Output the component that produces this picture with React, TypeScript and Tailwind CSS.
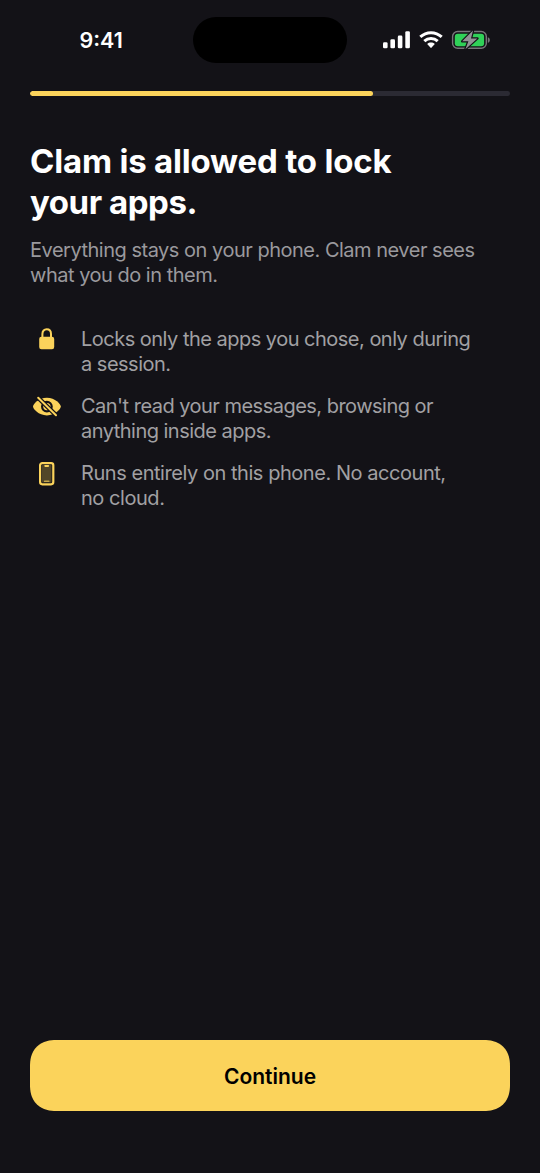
import React from "react";

const LockIcon = () => (
  <svg width="34" height="26" viewBox="0 0 34 26" fill="none">
    <path
      d="M12.4 12V6.9C12.4 4.1 14.2 2.3 16.7 2.3S21 4.1 21 6.9V12"
      stroke="#fbd35b"
      strokeWidth="2"
    />
    <rect x="9.2" y="9.8" width="15" height="12.5" rx="2.2" fill="#fbd35b" />
  </svg>
);

const EyeSlashIcon = () => (
  <svg width="34" height="26" viewBox="0 0 34 26" fill="none">
    <path
      d="M3 12.6C3 10.2 8.6 3.7 16.9 3.7S30.8 10.2 30.8 12.6 25.3 21.5 16.9 21.5 3 15 3 12.6Z"
      fill="#fbd35b"
    />
    <circle cx="16.9" cy="12.6" r="4.8" stroke="#131217" strokeWidth="2.2" />
    <circle cx="16.9" cy="12.6" r="1.7" fill="#131217" />
    <path d="M7 2.6L27 22.1" stroke="#131217" strokeWidth="4.4" />
    <path
      d="M8.2 3.7L26 21.3"
      stroke="#fbd35b"
      strokeWidth="2"
      strokeLinecap="round"
    />
  </svg>
);

const PhoneIcon = () => (
  <svg width="34" height="26" viewBox="0 0 34 26" fill="none">
    <rect
      x="10.1"
      y="2.1"
      width="13.2"
      height="21.2"
      rx="2.2"
      fill="#131217"
      stroke="#fbd35b"
      strokeWidth="2.2"
    />
    <rect x="11.9" y="4" width="9.6" height="17.4" rx="0.6" fill="#514628" />
    <rect x="14.3" y="4" width="4.8" height="1.9" rx="0.8" fill="#fbd35b" />
    <rect x="13.9" y="19.6" width="5.6" height="1.5" rx="0.6" fill="#c4a64b" />
  </svg>
);

const features = [
  {
    icon: <LockIcon />,
    lines: ["Locks only the apps you chose, only during", "a session."],
    className: "tracking-[-0.51px]",
  },
  {
    icon: <EyeSlashIcon />,
    lines: ["Can't read your messages, browsing or", "anything inside apps."],
    className: "tracking-[-0.52px]",
  },
  {
    icon: <PhoneIcon />,
    lines: ["Runs entirely on this phone. No account,", "no cloud."],
    className: "tracking-[-0.45px]",
  },
];

const StatusBar = () => (
  <header className="flex h-[91px] items-start px-[30px] pt-[17px] text-white">
    <div className="flex h-[47px] w-[163px] items-center pl-[49.5px] text-[21.5px] font-semibold">
      9:41
    </div>
    <div className="h-[45.5px] w-[154px] rounded-full bg-black" />
    <div className="flex h-[46px] flex-1 items-center pl-9">
      <svg width="108" height="20" viewBox="0 0 108 20" fill="none">
        <rect x="0" y="12.3" width="4.6" height="5.9" rx="1.3" fill="white" />
        <rect x="7.4" y="9.2" width="4.6" height="9" rx="1.3" fill="white" />
        <rect x="14.8" y="5.6" width="4.6" height="12.6" rx="1.3" fill="white" />
        <rect x="22.3" y="1.3" width="4.6" height="16.9" rx="1.3" fill="white" />
        <g stroke="white" strokeWidth="3">
          <path d="M37.3 6.9C43.4 1.2 52.6 1.2 58.7 6.9" />
          <path d="M41.3 11.2C45.1 7.6 50.9 7.6 54.7 11.2" />
        </g>
        <path
          d="M44.2 14C46.4 12.1 49.6 12.1 51.8 14L48.6 17.6Q48 18.2 47.4 17.6Z"
          fill="white"
        />
        <rect
          x="69.6"
          y="1.5"
          width="33.7"
          height="16.8"
          rx="5"
          stroke="#77767a"
          strokeWidth="1.4"
        />
        <rect x="71.8" y="3.8" width="29.3" height="12.4" rx="3" fill="#30d158" />
        <path d="M104.8 7.2C107.5 8 107.5 12 104.8 12.8Z" fill="#77767a" />
        <path
          d="M90 0.6L79.2 11.3H85.4L82.4 19.2L94.4 8.4H88Z"
          fill="#939296"
          stroke="#131217"
          strokeWidth="2.4"
          strokeLinejoin="round"
          paintOrder="stroke"
        />
      </svg>
    </div>
  </header>
);

const App = () => {
  return (
    <div className="flex h-[1173px] w-[540px] flex-col bg-[#131217] font-['Inter',sans-serif]">
      <StatusBar />
      <main className="flex flex-1 flex-col px-[30px] pb-[62px]">
        <div className="h-[5px] shrink-0 overflow-hidden rounded-full bg-[#2b2a33]">
          <div className="h-full w-[343px] rounded-full bg-[#fbd35b]" />
        </div>
        <h1 className="mt-[45px] text-[33px] leading-[41px] font-bold tracking-[-0.2px] whitespace-nowrap text-white">
          Clam is allowed to lock
          <br />
          <span className="tracking-[-0.45px]">your apps.</span>
        </h1>
        <p className="mt-[15px] text-[20px] leading-[25px] tracking-[-0.49px] whitespace-nowrap text-[#9a999d]">
          Everything stays on your phone. Clam never sees
          <br />
          what you do in them.
        </p>
        <ul className="mt-[39px] flex flex-col gap-[17px]">
          {features.map((feature) => (
            <li key={feature.lines[0]} className="flex gap-[17px]">
              <span className="h-[26px] w-[34px] shrink-0">{feature.icon}</span>
              <p
                className={`text-[20px] leading-[25px] whitespace-nowrap text-[#a1a0a3] ${feature.className}`}
              >
                {feature.lines[0]}
                <br />
                {feature.lines[1]}
              </p>
            </li>
          ))}
        </ul>
        <button className="mt-auto h-[71px] w-full rounded-[26px] bg-[#fbd35b] pt-[3px] text-[21px] font-semibold text-black [corner-shape:superellipse(1.2)]">
          Continue
        </button>
      </main>
    </div>
  );
};

export default App;
